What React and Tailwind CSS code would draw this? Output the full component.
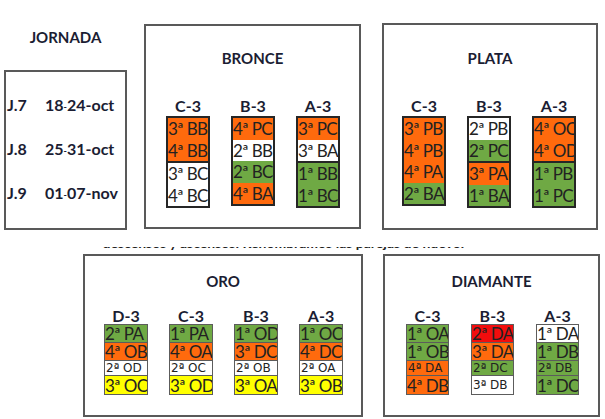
import React from "react";

const BG = {
  o: "bg-[#ff6a0d]",
  g: "bg-[#6fa944]",
  w: "bg-white",
  y: "bg-[#ffff00]",
  r: "bg-[#f20d0d]",
};

// groups: array of arrays of [color, text]
const bronce = [
  { name: "C-3", groups: [[["o", "3ª BB"], ["o", "4ª BB"]], [["w", "3ª BC"], ["w", "4ª BC"]]] },
  { name: "B-3", groups: [[["o", "4ª PC"], ["w", "2ª BB"], ["g", "2ª BC"], ["o", "4ª BA"]]] },
  { name: "A-3", groups: [[["o", "3ª PC"], ["w", "3ª BA"]], [["g", "1ª BB"], ["g", "1ª BC"]]] },
];

const plata = [
  { name: "C-3", groups: [[["o", "3ª PB"], ["o", "4ª PB"], ["o", "4ª PA"], ["g", "2ª BA"]]] },
  { name: "B-3", groups: [[["w", "2ª PB"], ["g", "2ª PC"]], [["o", "3ª PA"], ["g", "1ª BA"]]] },
  { name: "A-3", groups: [[["o", "4ª OC"], ["o", "4ª OD"]], [["g", "1ª PB"], ["g", "1ª PC"]]] },
];

// [color, text, small]
const oro = [
  { name: "D-3", cells: [["g", "2ª PA"], ["o", "4ª OB"], ["w", "2ª OD", true], ["y", "3ª OC"]] },
  { name: "C-3", cells: [["g", "1ª PA"], ["o", "4ª OA"], ["w", "2ª OC", true], ["y", "3ª OD"]] },
  { name: "B-3", cells: [["g", "1ª OD"], ["o", "3ª DC"], ["w", "2ª OB", true], ["y", "3ª OA"]] },
  { name: "A-3", cells: [["g", "1ª OC"], ["o", "4ª DC"], ["w", "2ª OA", true], ["y", "3ª OB"]] },
];

const diamante = [
  { name: "C-3", cells: [["g", "1ª OA"], ["g", "1ª OB"], ["o", "4ª DA", true], ["o", "4ª DB"]] },
  { name: "B-3", cells: [["r", "2ª DA"], ["o", "3ª DA"], ["g", "2ª DC", true], ["w", "3ª DB", true]] },
  { name: "A-3", cells: [["w", "1ª DA"], ["g", "1ª DB"], ["g", "2ª DB", true], ["g", "1ª DC"]] },
];

const rowH = ["h-[18px]", "h-[18px]", "h-[15px]", "h-[18px]"];

function BigColumn({ col }) {
  return (
    <div className="flex flex-col items-center w-[44px]">
      <div className="h-[20px] leading-[20px] text-[16px] font-bold text-[#1b1d33]">{col.name}</div>
      <div className="w-[44px] border-2 border-[#262626] flex flex-col">
        {col.groups.map((grp, gi) => (
          <div key={gi} className={gi > 0 ? "border-t-2 border-[#262626]" : ""}>
            {grp.map(([c, t], i) => (
              <div
                key={i}
                className={`${BG[c]} h-[21.5px] leading-[21.5px] text-[17px] tracking-[-0.6px] text-[#222] whitespace-nowrap overflow-hidden`}
              >
                {t}
              </div>
            ))}
          </div>
        ))}
      </div>
    </div>
  );
}

function SmallColumn({ col, w }) {
  return (
    <div className={`flex flex-col items-center ${w}`}>
      <div className="h-[16px] leading-[16px] text-[16px] font-bold text-[#1b1d33]">{col.name}</div>
      <div className={`${w} border border-[#5c5c5c] flex flex-col divide-y divide-[#5c5c5c]`}>
        {col.cells.map(([c, t, small], i) => (
          <div
            key={i}
            className={`${BG[c]} ${rowH[i]} whitespace-nowrap overflow-hidden text-[#222] flex items-center leading-[15px] ${
              small ? "text-[12px] font-['DejaVu_Sans',sans-serif] pl-[1px]" : "text-[17px] tracking-[-0.6px]"
            }`}
          >
            {t}
          </div>
        ))}
      </div>
    </div>
  );
}

function Box({ title, className, children, titleClass }) {
  return (
    <div className={`border-2 border-[#595959] bg-white flex flex-col ${className}`}>
      <div className={`text-center text-[15px] font-bold leading-[18px] text-[#1b1d33] ${titleClass}`}>{title}</div>
      {children}
    </div>
  );
}

export default function App() {
  return (
    <div className="w-[605px] h-[419px] bg-white overflow-hidden font-['Lato','Open_Sans',sans-serif]">
      {/* top row */}
      <div className="flex items-start pt-[23px]">
        <div className="ml-[4px] w-[123px] flex flex-col">
          <div className="mt-[5px] text-center text-[15px] font-bold leading-[18px] text-[#1b1d33]">JORNADA</div>
          <div className="mt-[24px] h-[160px] border-2 border-[#595959] pt-[11px] text-[16px] font-bold text-[#1b1d33]">
            {[
              ["J.7", "18", "24-oct"],
              ["J.8", "25", "31-oct"],
              ["J.9", "01", "07-nov"],
            ].map(([j, a, b]) => (
              <div key={j} className="h-[44px] flex items-center">
                <span className="pl-[1px] w-[39px]">{j}</span>
                <span>
                  {a}
                  <span className="text-[9px] align-middle">-</span>
                  {b}
                </span>
              </div>
            ))}
          </div>
        </div>

        <Box title="BRONCE" className="ml-[17px] mt-[1px] w-[217px] h-[205px]" titleClass="mt-[23px]">
          <div className="mt-[29px] pl-[20px] flex gap-[21px]">
            {bronce.map((c) => (
              <BigColumn key={c.name} col={c} />
            ))}
          </div>
        </Box>

        <Box title="PLATA" className="ml-[21px] w-[216px] h-[207px]" titleClass="mt-[24px]">
          <div className="mt-[29px] pl-[18px] flex gap-[21px]">
            {plata.map((c) => (
              <BigColumn key={c.name} col={c} />
            ))}
          </div>
        </Box>
      </div>

      {/* clipped line of text */}
      <div className="mt-[17px] ml-[80px] h-[5px] overflow-hidden">
        <div className="-mt-[12px] text-[14px] font-bold leading-[16px] text-[#222] whitespace-nowrap">
          -- - descensos y ascensos: Renombramos las parejas de nuevo.
        </div>
      </div>

      {/* bottom row */}
      <div className="mt-[2px] flex items-start">
        <Box title="ORO" className="ml-[83px] w-[280px] h-[163px]" titleClass="mt-[16px]">
          <div className="mt-[18px] pl-[19px] flex gap-[21px]">
            {oro.map((c) => (
              <SmallColumn key={c.name} col={c} w="w-[44px]" />
            ))}
          </div>
        </Box>
        <Box title="DIAMANTE" className="ml-[20px] w-[217px] h-[163px]" titleClass="mt-[16px]">
          <div className="mt-[18px] pl-[21px] flex gap-[22px]">
            {diamante.map((c) => (
              <SmallColumn key={c.name} col={c} w="w-[43px]" />
            ))}
          </div>
        </Box>
      </div>
    </div>
  );
}
